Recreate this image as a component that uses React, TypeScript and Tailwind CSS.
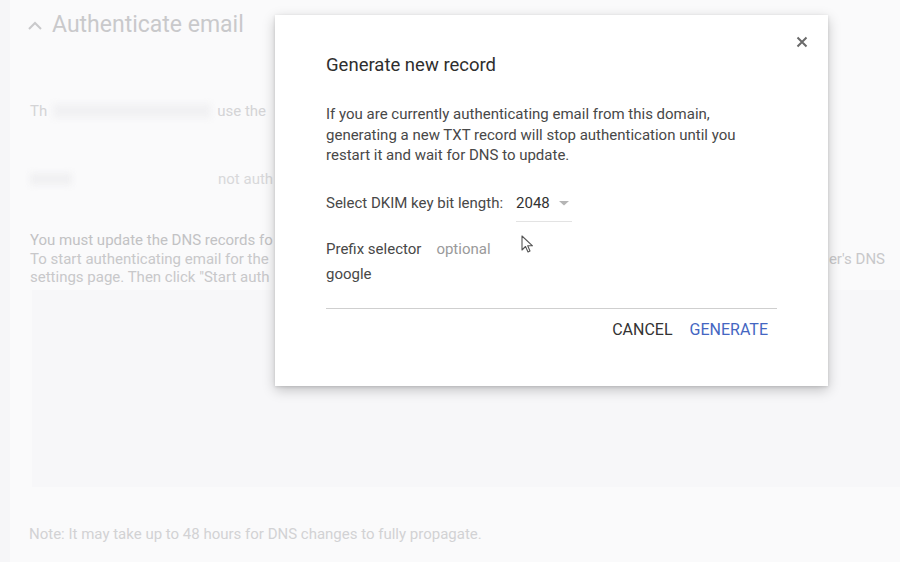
import React from "react";

export default function App() {
  return (
    <div
      className="relative w-[900px] h-[562px] overflow-hidden bg-[#f6f6f8]"
      style={{ fontFamily: "Roboto, 'Liberation Sans', sans-serif" }}
    >
      {/* Background page (washed out) */}
      <div className="ml-[10px] h-full bg-[#fafafb] flex flex-col">
        <div className="flex items-center h-[46px] pl-[17px] pt-[4px]">
          <svg width="16" height="11" viewBox="0 0 16 11" className="mr-[9px]">
            <polyline points="2,9 8,3 14,9" fill="none" stroke="#c9c9cb" strokeWidth="2" />
          </svg>
          <span className="text-[23px] text-[#c9c9cb]">Authenticate email</span>
        </div>
        <div className="mt-[55px] pl-[20px] flex items-center text-[15px] h-[20px] text-[#d4d4d6] whitespace-nowrap">
          <span>Th</span>
          <span className="w-[158px] shrink-0 h-[14px] mx-[6px] bg-[#f1f1f3] blur-[3px]" />
          <span>use the</span>
        </div>
        <div className="mt-[48px] pl-[20px] flex items-center text-[15px] h-[20px] text-[#d8d8da] whitespace-nowrap">
          <span className="w-[42px] shrink-0 h-[12px] bg-[#f0f0f2] blur-[3px]" />
          <span className="ml-[146px]">not auth</span>
        </div>
        <div className="mt-[42px] pl-[20px] pr-[15px] text-[15px] leading-[18.5px] text-[#c8c8ca]">
          <div className="text-[#c2c2c4] whitespace-nowrap">You must update the DNS records fo</div>
          <div className="flex justify-between">
            <span className="whitespace-nowrap">To start authenticating email for the</span>
            <span>er's DNS</span>
          </div>
          <div className="whitespace-nowrap">settings page. Then click "Start auth</div>
        </div>
        <div className="ml-[22px] mt-[3px] h-[197px] bg-[#f7f7f9]" />
        <div className="mt-[36px] pl-[19px] text-[15px] text-[#d2d2d4]">
          Note: It may take up to 48 hours for DNS changes to fully propagate.
        </div>
      </div>

      {/* Dialog */}
      <div className="absolute left-[275px] top-[15px] w-[553px] h-[371px] bg-white shadow-[0_4px_12px_rgba(0,0,0,0.22),0_1px_3px_rgba(0,0,0,0.12)] px-[51px] pt-[37px] text-[#444]">
        <button className="absolute right-[19px] top-[20px] w-[14px] h-[14px] flex items-center justify-center">
          <svg width="12" height="12" viewBox="0 0 12 12">
            <path d="M1.5 1.5 L10.5 10.5 M10.5 1.5 L1.5 10.5" stroke="#6a6a6a" strokeWidth="2" />
          </svg>
        </button>
        <div className="text-[18.5px] leading-[26px] text-[#2e2e2e]">Generate new record</div>
        <div className="mt-[26px] text-[15px] leading-[20.5px] text-[#484848]">
          If you are currently authenticating email from this domain,
          <br />
          generating a new TXT record will stop authentication until you
          <br />
          restart it and wait for DNS to update.
        </div>
        <div className="mt-[27px] flex items-start text-[15px] leading-[20px] text-[#484848]">
          <span>Select DKIM key bit length:</span>
          <div className="ml-[13px] w-[56px] flex items-center border-b border-[#e3e3e3] pb-[8px]">
            <span className="text-[#333]">2048</span>
            <svg width="10" height="6" viewBox="0 0 10 6" className="ml-[9px]">
              <polygon points="0,1 10,1 5,5.5" fill="#b5b5b5" />
            </svg>
          </div>
        </div>
        <div className="mt-[17px] flex text-[15px] leading-[20px]">
          <span className="text-[#484848]">Prefix selector</span>
          <span className="ml-[15px] text-[#9a9a9a]">optional</span>
        </div>
        <div className="mt-[5px] text-[15px] leading-[20px] text-[#484848]">google</div>
        <div className="mt-[24px] border-t border-[#cfcfcf]" />
        <div className="mt-[11px] flex justify-end gap-[1px] pr-[1px] text-[16px] leading-[20px]">
          <button className="px-[8px] text-[#333]">CANCEL</button>
          <button className="px-[8px] text-[#4466c2]">GENERATE</button>
        </div>
      </div>

      {/* Mouse cursor */}
      <svg className="absolute left-[521px] top-[235px]" width="14" height="20" viewBox="0 0 14 20">
        <path d="M1 1 L1 15 L4.5 11.5 L7 17 L9 16 L6.7 10.8 L11.5 10.8 Z" fill="white" stroke="#555" strokeWidth="1.1" strokeLinejoin="round" />
      </svg>
    </div>
  );
}
